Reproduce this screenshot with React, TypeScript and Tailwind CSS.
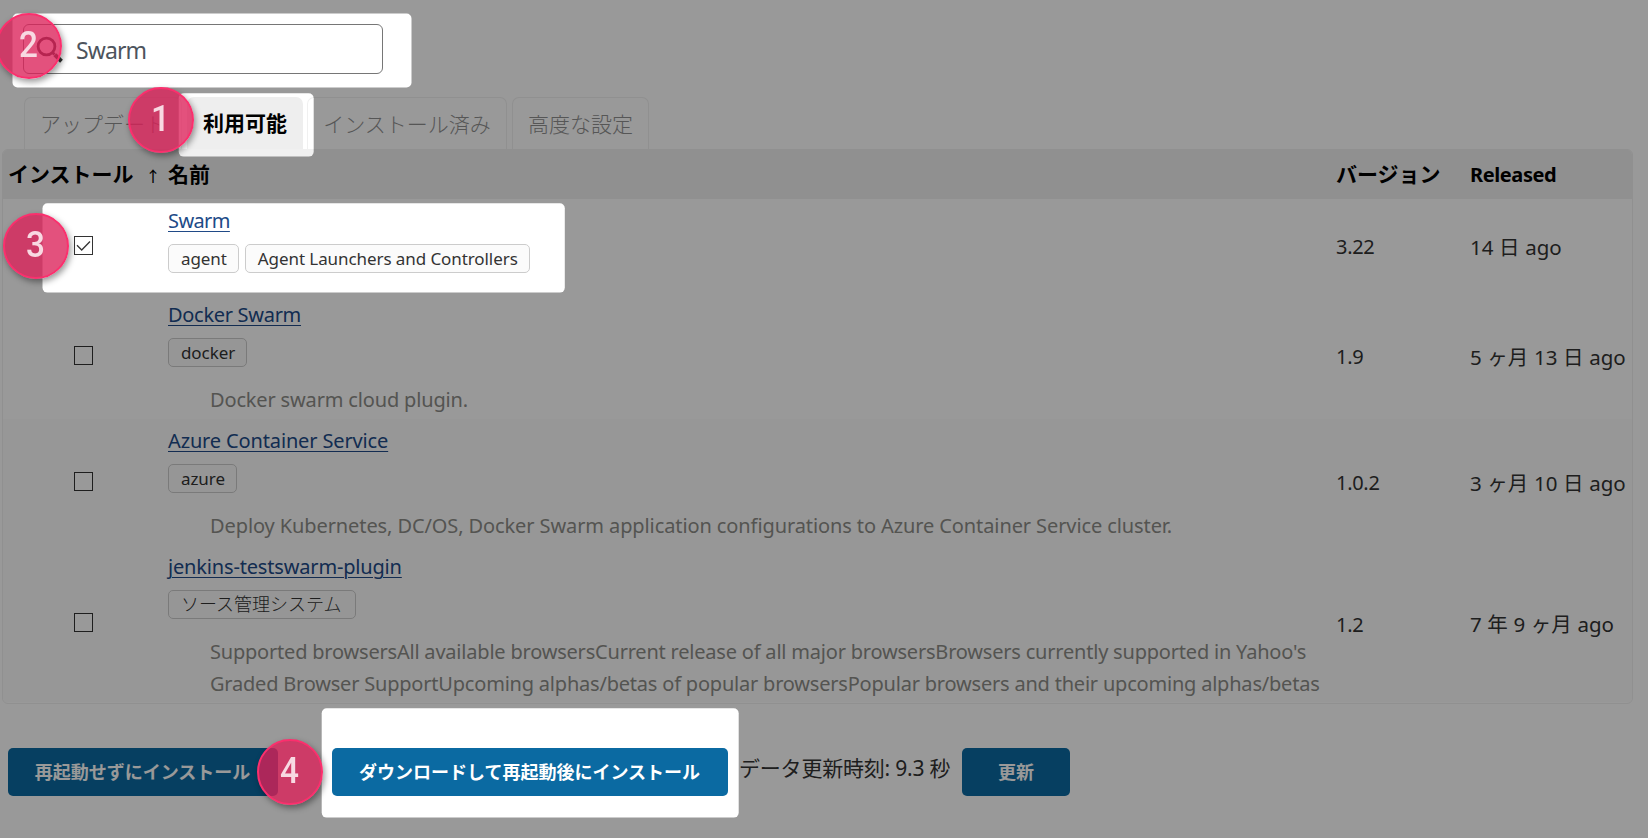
const LATIN = "font-['Noto_Sans','Noto_Sans_CJK_JP',sans-serif]";

type Plugin = {
  name: string;
  tags: string[];
  description?: string;
  version: string;
  released: string;
  checked?: boolean;
  height: string;
  nameSpacing: string;
  tagText?: string;
  textSpacing?: string;
};

const plugins: Plugin[] = [
  { name: 'Swarm', tags: ['agent', 'Agent Launchers and Controllers'], version: '3.22', released: '14 日 ago', checked: true, height: 'h-[94px]', nameSpacing: 'tracking-[-0.6px]' },
  { name: 'Docker Swarm', tags: ['docker'], description: 'Docker swarm cloud plugin.', version: '1.9', released: '5 ヶ月 13 日 ago', height: 'h-[126px]', nameSpacing: 'tracking-[-0.3px]', textSpacing: 'tracking-[-0.16px]' },
  { name: 'Azure Container Service', tags: ['azure'], description: 'Deploy Kubernetes, DC/OS, Docker Swarm application configurations to Azure Container Service cluster.', version: '1.0.2', released: '3 ヶ月 10 日 ago', height: 'h-[126px] bg-[#fcfcfc]', nameSpacing: 'tracking-[-0.14px]', textSpacing: 'tracking-[-0.1px]' },
  { name: 'jenkins-testswarm-plugin', tags: ['ソース管理システム'], description: "Supported browsersAll available browsersCurrent release of all major browsersBrowsers currently supported in Yahoo's Graded Browser SupportUpcoming alphas/betas of popular browsersPopular browsers and their upcoming alphas/betas", version: '1.2', released: '7 年 9 ヶ月 ago', height: 'h-[157px] bg-[#fcfcfc]', nameSpacing: 'tracking-[-0.17px]', tagText: 'text-[18px] font-light', textSpacing: 'tracking-[-0.205px]' },
];

const tabs = [
  { label: 'アップデート', width: 'w-[158px]' },
  { label: '利用可能', width: 'w-[116px]', active: true },
  { label: 'インストール済み', width: 'w-[200px] -ml-px' },
  { label: '高度な設定', width: 'w-[137px]' },
];

function Checkbox({ checked }: { checked?: boolean }) {
  return (
    <span className="flex size-[19px] items-center justify-center border border-[#333] bg-white">
      {checked && (
        <svg viewBox="0 0 17 17" className="size-[17px]" fill="none" stroke="#333" strokeWidth="1.3">
          <path d="M2 8.3 6.7 13 15 4.5" />
        </svg>
      )}
    </span>
  );
}

function Row({ plugin }: { plugin: Plugin }) {
  return (
    <div className={`flex ${plugin.height}`}>
      <div className="flex w-[165px] items-center pb-[2px] pl-[71px]">
        <Checkbox checked={plugin.checked} />
      </div>
      <div className="w-[1168px] pt-[6px]">
        <a className={`block h-[32px] text-[20px] leading-[32px] text-[#204a87] underline decoration-1 underline-offset-[3px] ${plugin.nameSpacing}`}>
          {plugin.name}
        </a>
        <div className="flex gap-[6px] pt-[7px]">
          {plugin.tags.map((t) => (
            <span key={t} className={`h-[29px] rounded-[5px] border border-[#ccc] bg-[#fbfbfb] pl-[12px] leading-[27px] text-[#333] ${plugin.tagText ?? 'pr-[11px] text-[17px] tracking-[-0.08px]'} ${plugin.tagText ? 'pr-[13px]' : ''}`}>
              {t}
            </span>
          ))}
        </div>
        {plugin.description && (
          <p className={`mt-[17px] ml-[42px] w-[1122px] text-[20px] leading-[31.5px] text-[#8c8c88] ${plugin.textSpacing}`}>{plugin.description}</p>
        )}
      </div>
      <div className="flex w-[134px] items-center pt-[2px] text-[20px] tracking-[-0.3px]">{plugin.version}</div>
      <div className="flex items-center pt-[2px] text-[20.5px] whitespace-nowrap [word-spacing:0.3px]">{plugin.released}</div>
    </div>
  );
}

function Marker({ n, place }: { n: number; place: string }) {
  return (
    <div className={`absolute flex size-[66px] items-center justify-center rounded-full border-2 border-[#fb2f6d] bg-[#db2058]/78 pb-1 font-['Roboto',sans-serif] text-[37px] leading-none font-medium text-[#f8d9e2] shadow-[2px_3px_6px_rgba(0,0,0,0.4)] ${place}`}>
      <span className="scale-x-90">{n}</span>
    </div>
  );
}

export default function App() {
  return (
    <div className={`relative h-[838px] w-[1648px] overflow-hidden bg-white text-[#333] ${LATIN}`}>
      <div className="pt-[24px] pl-[23px]">
        <div className="flex h-[50px] w-[360px] items-center rounded-[6px] border border-[#767676] bg-white pt-[2px] pl-[12px]">
          <svg viewBox="0 0 28 28" className="size-[28px]" fill="none" stroke="#333" strokeWidth="2.8">
            <circle cx="10.5" cy="10.5" r="8.4" />
            <path d="M16.5 16.5 18.5 18.5" />
            <path d="M18.8 18.8 25.5 25.2" strokeWidth="4" />
          </svg>
          <span className="pt-px pl-[12px] text-[23px] tracking-[-0.9px] text-[#4d545d]">Swarm</span>
        </div>
      </div>

      <div className="mt-[23px] flex h-[52px] gap-[5px] pl-[24px]">
        {tabs.map((t) => (
          <div
            key={t.label}
            className={`flex items-center justify-center rounded-t-[7px] text-[21px] ${t.width} ${t.active ? 'bg-[#eee] pt-[2px] font-bold text-black' : 'border border-b-0 border-[#f0f0f0] pt-[2px] font-light text-[#8f8f8f]'}`}
          >
            {t.label}
          </div>
        ))}
      </div>

      <div className="ml-[2px] h-[555px] w-[1631px] overflow-hidden rounded-[6px] border border-[#f0f0f0]">
        <div className="flex h-[49px] items-center bg-[#f0f0f0] text-[21px] font-bold text-black">
          <div className="flex w-[165px] items-center pl-[5px]">
            インストール<span className="pt-[2px] pl-[12px] text-[15px] leading-[20px] font-medium">↑</span>
          </div>
          <div className="w-[1168px]">名前</div>
          <div className="w-[134px]">バージョン</div>
          <div className="pt-px text-[20px] tracking-[-0.4px]">Released</div>
        </div>
        {plugins.map((p) => (
          <Row key={p.name} plugin={p} />
        ))}
      </div>

      <div className="mt-[44px] flex h-[48px] pl-[8px] text-[18px] font-bold text-white">
        <button className="w-[270px] rounded-[5px] bg-[#0b6aa2] pr-px">再起動せずにインストール</button>
        <button className="ml-[54px] w-[396px] rounded-[5px] bg-[#0b6aa2] pr-px">ダウンロードして再起動後にインストール</button>
        <span className="ml-[11px] w-[223px] text-[21px] leading-[40px] font-normal tracking-[-0.2px] whitespace-nowrap text-[#333]">データ更新時刻: 9.3 秒</span>
        <button className="w-[108px] rounded-[5px] bg-[#0b6aa2]">更新</button>
      </div>

      <svg className="absolute inset-0 size-full" viewBox="0 0 1648 838">
        <defs>
          <mask id="spotlights">
            <rect width="1648" height="838" fill="#fff" />
            <g fill="#000">
              <rect x="12.5" y="13.5" width="399" height="74" rx="5" />
              <rect x="178.7" y="93.3" width="135" height="63.3" rx="5" />
              <rect x="42.5" y="203.3" width="522.3" height="89.3" rx="5" />
              <rect x="321.7" y="708.3" width="417" height="109.3" rx="5" />
            </g>
          </mask>
        </defs>
        <rect width="1648" height="838" fill="#000" fillOpacity="0.4" mask="url(#spotlights)" />
      </svg>

      <Marker n={2} place="top-[13px] left-[-4px]" />
      <Marker n={1} place="top-[87px] left-[127.5px]" />
      <Marker n={3} place="top-[213px] left-[3px]" />
      <Marker n={4} place="top-[739px] left-[257px]" />
    </div>
  );
}
